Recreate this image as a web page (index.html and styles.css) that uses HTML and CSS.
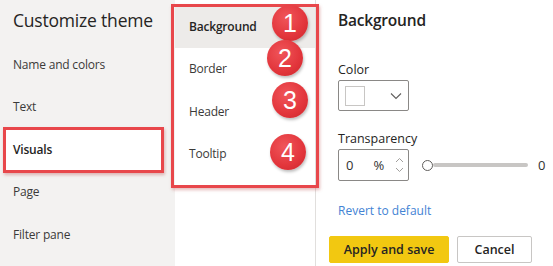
FILE: index.html
```html
<!DOCTYPE html>
<html>
<head>
<meta charset="utf-8">
<link rel="stylesheet" href="styles.css">
</head>
<body>
<div class="app">
  <nav class="side">
    <h1 class="side-title">Customize theme</h1>
    <ul class="side-list">
      <li class="side-item">Name and colors</li>
      <li class="side-item">Text</li>
      <li class="side-item active">Visuals</li>
      <li class="side-item">Page</li>
      <li class="side-item">Filter pane</li>
    </ul>
    <div class="mark mark-visuals"></div>
  </nav>
  <section class="sub">
    <ul class="sub-list">
      <li class="sub-item active">Background</li>
      <li class="sub-item">Border</li>
      <li class="sub-item">Header</li>
      <li class="sub-item">Tooltip</li>
    </ul>
    <div class="mark mark-sub"></div>
    <span class="badge b1">1</span>
    <span class="badge b2">2</span>
    <span class="badge b3">3</span>
    <span class="badge b4">4</span>
  </section>
  <main class="pane">
    <h2 class="pane-title">Background</h2>
    <label class="field-label">Color</label>
    <div class="color-pick">
      <span class="swatch"></span>
      <svg class="chev" width="12" height="8" viewBox="0 0 12 8"><path d="M1 1.5 L6 6.5 L11 1.5" fill="none" stroke="#605e5c" stroke-width="1.1"/></svg>
    </div>
    <label class="field-label trans">Transparency</label>
    <div class="trans-row">
      <div class="num">
        <span class="num-val">0</span>
        <span class="num-unit">%</span>
        <span class="spin">
          <svg width="9" height="6" viewBox="0 0 9 6"><path d="M1 5 L4.5 1.5 L8 5" fill="none" stroke="#a19f9d" stroke-width="1"/></svg>
          <svg width="9" height="6" viewBox="0 0 9 6"><path d="M1 1 L4.5 4.5 L8 1" fill="none" stroke="#a19f9d" stroke-width="1"/></svg>
        </span>
      </div>
      <div class="slider"><span class="thumb"></span><span class="track"></span></div>
      <span class="slider-val">0</span>
    </div>
    <a class="revert">Revert to default</a>
    <div class="actions">
      <button class="btn primary">Apply and save</button>
      <button class="btn">Cancel</button>
    </div>
  </main>
</div>
</body>
</html>
```
FILE: styles.css
```css
* { box-sizing: border-box; }
html, body { margin: 0; padding: 0; }
body {
  width: 553px; height: 266px; overflow: hidden;
  font-family: "Segoe UI", "Open Sans", "Noto Sans", sans-serif;
  color: #252423;
  background: #fff;
}
.app { display: flex; height: 266px; }
ul { list-style: none; margin: 0; padding: 0; }

.side {
  position: relative;
  width: 175px; flex: none;
  background: #f3f2f1;
}
.side-title {
  margin: 0; height: 43px;
  padding: 8px 0 0 13px;
  font-size: 17.5px; font-weight: 400; letter-spacing: -0.2px;
  color: #252423;
}
.side-item {
  height: 42.5px; display: flex; align-items: center;
  padding-left: 13px;
  font-size: 12px; letter-spacing: -0.2px;
  color: #3b3a39;
}
.side-item.active {
  background: #fff; font-weight: 600; color: #252423;
  margin: 0 12px 0 5px; padding-left: 8px;
}

.mark {
  position: absolute;
  border: 3px solid #e8474b;
  box-shadow: 1px 2px 3px rgba(180, 60, 60, 0.35);
}
.mark-visuals { left: 3px; top: 127px; width: 161px; height: 46px; }

.sub {
  position: relative;
  width: 141px; flex: none;
  border-right: 1px solid #e1dfdd;
  padding-top: 5px;
}
.sub-item {
  height: 42.5px; display: flex; align-items: center;
  padding-left: 14px;
  font-size: 12px; letter-spacing: -0.2px;
  color: #3b3a39;
}
.sub-item.active { background: #edebe9; font-weight: 600; color: #252423; }
.mark-sub { left: -4px; top: 4px; width: 148px; height: 184px; }

.badge {
  position: absolute;
  width: 36px; height: 36px; border-radius: 50%;
  background: radial-gradient(circle at 40% 35%, #f0555a 0%, #e2353b 60%, #c9262c 100%);
  color: #fff;
  font-family: "Liberation Sans", Arial, sans-serif;
  font-size: 25px; line-height: 36px; text-align: center;
  box-shadow: 1px 2px 3px rgba(0,0,0,0.25);
}
.b1 { left: 97px; top: 5px; }
.b2 { left: 92px; top: 40px; }
.b3 { left: 97px; top: 82px; }
.b4 { left: 95px; top: 134px; }

.pane {
  flex: 1;
  padding: 9px 0 0 22px;
  display: flex; flex-direction: column; align-items: flex-start;
}
.pane-title {
  margin: 0; font-size: 15.5px; font-weight: 600; letter-spacing: -0.2px;
  color: #252423;
}
.field-label {
  margin-top: 30px;
  font-size: 12.5px; font-weight: 400; color: #252423;
}
.field-label.trans { margin-top: 19px; }
.color-pick {
  margin-top: 2px;
  width: 71px; height: 31px;
  border: 1px solid #8a8886; border-radius: 2px;
  display: flex; align-items: center; justify-content: space-between;
  padding: 0 6px 0 6px;
}
.swatch { width: 20px; height: 20px; border: 1px solid #c8c6c4; background: #fff; }
.chev { margin-top: 1px; }

.trans-row { display: flex; align-items: center; margin-top: 2px; }
.num {
  width: 71px; height: 32px;
  border: 1px solid #8a8886; border-radius: 2px;
  display: flex; align-items: center;
  padding-left: 7px;
  font-size: 13px; color: #323130;
}
.num-unit { margin-left: 20px; }
.spin { display: flex; flex-direction: column; gap: 4px; margin-left: 11px; }
.spin svg { display: block; }
.slider { position: relative; width: 110px; height: 12px; margin-left: 13px; display: flex; align-items: center; }
.thumb {
  width: 11px; height: 11px; border-radius: 50%;
  border: 1.5px solid #605e5c; background: #fff; flex: none;
}
.track { height: 4px; width: 95px; background: #c8c6c4; border-radius: 2px; }
.slider-val { margin-left: 6px; font-size: 13px; color: #323130; }

.revert {
  margin-top: 21px;
  font-size: 12px; color: #4283d4;
}
.actions { display: flex; gap: 8px; margin-top: 17px; margin-left: -9px; }
.btn {
  height: 27px; padding: 0;
  font-family: inherit; font-size: 12.5px; font-weight: 600;
  color: #252423; background: #fff;
  border: 1px solid #c8c6c4; border-radius: 2px;
  width: 75px;
}
.btn.primary { width: 120px; background: #f2c811; border-color: #f2c811; }
```
